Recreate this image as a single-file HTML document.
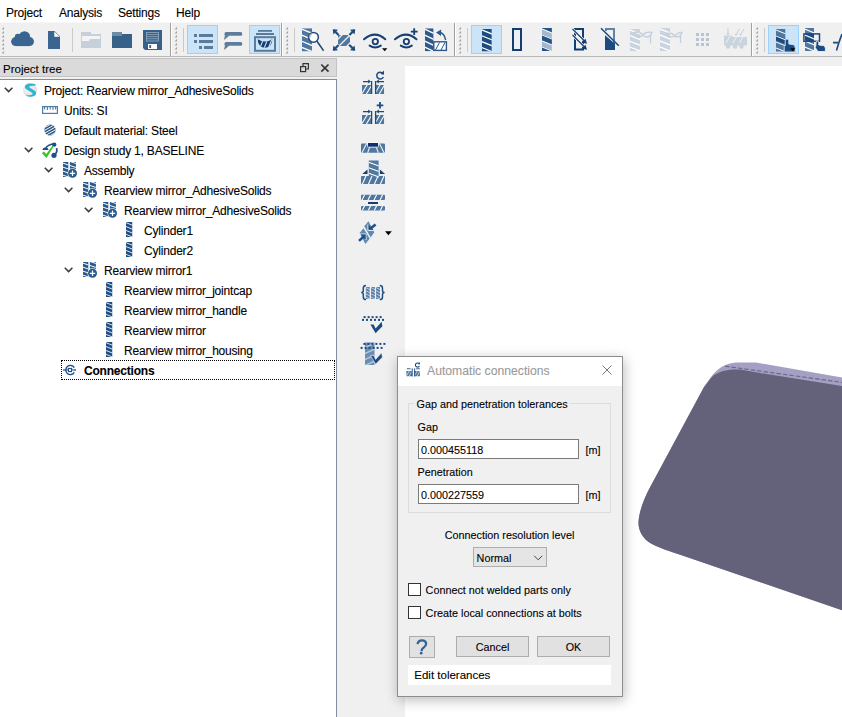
<!DOCTYPE html>
<html><head><meta charset="utf-8">
<style>
*{margin:0;padding:0;box-sizing:border-box}
html,body{width:842px;height:717px;overflow:hidden;background:#f0f0f0;font-family:"Liberation Sans",sans-serif;font-size:11.5px;color:#000;-webkit-text-stroke:0.1px currentColor}
.a{position:absolute}
#menu{left:0;top:0;width:842px;height:23px;background:#fff}
#menu span{position:absolute;top:5.6px;font-size:12px;letter-spacing:-0.2px;line-height:14px}
#tb{left:0;top:23px;width:842px;height:34px;background:#f0f0f0;border-bottom:1px solid #b9b9b9}
#dtitle{left:0;top:58px;width:337px;height:19px;background:#dadada;border:1px solid #c3c3c3;border-left:none}
#tree{left:0;top:79px;width:337px;height:638px;background:#fff;border-top:1px solid #828c9c;border-right:1px solid #828c9c}
#view{left:405px;top:66px;width:437px;height:651px;background:#fff}
.row{position:absolute;height:20px;line-height:20px;font-size:12px;letter-spacing:-0.2px;white-space:nowrap;padding-top:1px}
svg.ov{position:absolute;left:0;top:0}
</style></head><body>
<div id="menu" class="a">
<span style="left:6px">Project</span>
<span style="left:59px">Analysis</span>
<span style="left:118px">Settings</span>
<span style="left:176px">Help</span>
</div>
<div id="tb" class="a"></div>
<div id="dtitle" class="a"></div>
<div class="a" style="left:3px;top:62px;font-size:11.5px;line-height:14px">Project tree</div>
<div id="tree" class="a"></div>
<div id="view" class="a"></div>

<div class="row" style="left:44px;top:80px">Project: Rearview mirror_AdhesiveSolids</div>
<div class="row" style="left:64px;top:100px">Units: SI</div>
<div class="row" style="left:64px;top:120px">Default material: Steel</div>
<div class="row" style="left:64px;top:140px">Design study 1, BASELINE</div>
<div class="row" style="left:84px;top:160px">Assembly</div>
<div class="row" style="left:104px;top:180px">Rearview mirror_AdhesiveSolids</div>
<div class="row" style="left:124px;top:200px">Rearview mirror_AdhesiveSolids</div>
<div class="row" style="left:144px;top:220px">Cylinder1</div>
<div class="row" style="left:144px;top:240px">Cylinder2</div>
<div class="row" style="left:104px;top:260px">Rearview mirror1</div>
<div class="row" style="left:124px;top:280px">Rearview mirror_jointcap</div>
<div class="row" style="left:124px;top:300px">Rearview mirror_handle</div>
<div class="row" style="left:124px;top:320px">Rearview mirror</div>
<div class="row" style="left:124px;top:340px">Rearview mirror_housing</div>
<div class="row" style="left:84px;top:360px;font-weight:bold">Connections</div>
<div class="a" style="left:61px;top:360px;width:274px;height:20px;border:1px dotted #000"></div>
<svg class="ov" width="842" height="717" viewBox="0 0 842 717" shape-rendering="geometricPrecision">
<defs>
<symbol id="pt" viewBox="0 0 10 23" preserveAspectRatio="none">
<rect x="0" y="0" width="10" height="23" fill="currentColor"/>
<path d="M-1,0.6 L11,5.4 M-1,6.6 L11,11.4 M-1,12.6 L11,17.4 M-1,18.6 L11,23.4" stroke="#fff" stroke-width="1.3"/>
</symbol>
<symbol id="grip" viewBox="0 0 3 28"><path d="M0.6,2.2 L2.6,0.2 L2.6,2.2 Z M0.6,6.2 L2.6,4.2 L2.6,6.2 Z M0.6,10.2 L2.6,8.2 L2.6,10.2 Z M0.6,14.2 L2.6,12.2 L2.6,14.2 Z M0.6,18.2 L2.6,16.2 L2.6,18.2 Z M0.6,22.2 L2.6,20.2 L2.6,22.2 Z M0.6,26.2 L2.6,24.2 L2.6,26.2 Z " fill="#a2a2a2" stroke="#a2a2a2" stroke-width="0.4" stroke-linejoin="round"/></symbol>
</defs>
<!-- toolbar lines -->
<rect x="0" y="22" width="842" height="1" fill="#f7f7f7"/>
<g fill="#a0a0a0"><rect x="170" y="23" width="1" height="33"/><rect x="281" y="23" width="1" height="33"/><rect x="454" y="23" width="1" height="33"/><rect x="751" y="23" width="1" height="33"/></g>
<g fill="#fff"><rect x="171" y="23" width="1" height="33"/><rect x="282" y="23" width="1" height="33"/><rect x="455" y="23" width="1" height="33"/><rect x="752" y="23" width="1" height="33"/></g>
<use href="#grip" x="1.4" y="27" width="3" height="28"/>
<use href="#grip" x="174.4" y="27" width="3" height="28"/>
<use href="#grip" x="285.4" y="27" width="3" height="28"/>
<use href="#grip" x="458.4" y="27" width="3" height="28"/>
<use href="#grip" x="755.4" y="27" width="3" height="28"/>
<g fill="#cacaca"><rect x="72" y="28" width="1" height="24"/><rect x="183" y="28" width="1" height="24"/><rect x="294" y="28" width="1" height="24"/><rect x="467" y="28" width="1" height="24"/><rect x="764" y="28" width="1" height="24"/></g>
<!-- selected buttons -->
<g fill="#cce4f7" stroke="#99d1ff" stroke-width="1">
<rect x="187.5" y="25.5" width="30" height="28"/>
<rect x="249.5" y="25.5" width="30" height="28"/>
<rect x="471.5" y="25.5" width="30" height="28"/>
<rect x="768.5" y="25.5" width="30" height="28"/>
</g>
<!-- cloud -->
<g fill="#3a6590">
<circle cx="24.5" cy="36.8" r="5.6"/><circle cx="18" cy="37" r="3.2"/><circle cx="15.6" cy="41.6" r="4.5"/><circle cx="29.5" cy="41.6" r="4.5"/><rect x="15.6" y="37" width="14" height="9.1"/>
</g>
<!-- doc -->
<path d="M48,31 L54.5,31 L60,36.5 L60,49 L48,49 Z" fill="#3a6590"/>
<path d="M54.3,31.4 L59.6,36.8 L54.3,36.8 Z" fill="#fff"/>
<!-- light folder -->
<path d="M81,32 L91,32 L91,34 L101,34 L101,48 L81,48 Z" fill="#c6d0da"/>
<path d="M82,36 L100,36 L100,39 L90,39 L89,41 L82,41 Z" fill="#f4f4f4"/>
<!-- dark folder -->
<path d="M112,36 L122,36 L122,34 L132,34 L132,48 L112,48 Z" fill="#376189"/>
<rect x="112" y="32" width="10" height="4" fill="#6f8ca7"/>
<!-- floppy -->
<path d="M143,30 L162,30 L162,50 L145,50 L143,48 Z" fill="#376189"/>
<g stroke="#8aa3bb" stroke-width="0.9" fill="none"><rect x="146.5" y="32.5" width="12" height="8.5"/><path d="M146.5,34.6 H158.5 M146.5,36.7 H158.5 M146.5,38.8 H158.5"/></g>
<rect x="148" y="44" width="9" height="5" fill="#fff"/>
<rect x="149.3" y="45" width="1.8" height="3" fill="#376189"/>
<!-- list icon -->
<g fill="#5b7b9b">
<rect x="194" y="34" width="3" height="3"/><rect x="199" y="34" width="14" height="3"/>
<rect x="194" y="40" width="3" height="3"/><rect x="199" y="40" width="14" height="3"/>
<rect x="199" y="46" width="3" height="3"/><rect x="204" y="46" width="9" height="3"/>
</g>
<!-- comments -->
<g fill="#5d7d9d">
<rect x="224.5" y="32" width="17.7" height="3.8" rx="1.5"/><path d="M225,35 L224,40 L229.5,35.5 Z"/>
<rect x="224.5" y="42" width="17.7" height="3.8" rx="1.5"/><path d="M225,45 L224,50 L229.5,45.5 Z"/>
</g>
<!-- view stack icon -->
<g fill="#5b7b9b">
<rect x="258" y="30" width="14" height="1.8"/>
<rect x="256" y="33" width="18" height="2"/>
</g>
<rect x="255" y="37.2" width="20" height="13.6" fill="none" stroke="#5b7b9b" stroke-width="2"/>
<clipPath id="moon"><path d="M257.8,39.2 Q265,43.8 272.2,39.2 C272.4,44.5 268.8,47.7 265,47.7 C261.2,47.7 257.6,44.5 257.8,39.2 Z"/></clipPath>
<g clip-path="url(#moon)"><rect x="257" y="39" width="16" height="10" fill="#173d72"/><path d="M259.5,49 L263.5,39 M263.8,49 L267.8,39 M268,49 L272,39" stroke="#cce4f7" stroke-width="1.1"/></g>
<!-- search -->
<use href="#pt" x="302" y="28.2" width="10" height="23.3" style="color:#4f77a0"/>
<circle cx="313.5" cy="37.3" r="4.9" fill="#fff" stroke="#1f4a7a" stroke-width="1.5"/>
<path d="M309.5,37.5 A4,4 0 0 1 312,33.6" stroke="#9aa9b8" stroke-width="1.5" fill="none"/>
<path d="M317,41.3 L323.6,50.8" stroke="#1f4a7a" stroke-width="1.5"/>
<!-- cross arrows -->
<clipPath id="ova"><path d="M338,35 L347.5,35 L350,37.5 L350,46 L340.5,46 L338,43.5 Z"/></clipPath>
<g clip-path="url(#ova)"><rect x="337" y="34" width="14" height="13" fill="#4f77a0"/>
<path d="M334,43 L344,33 M338,47 L352,33 M342,51 L352,41" stroke="#f0f0f0" stroke-width="1.3"/></g>
<path d="M333.5,30 L338.6,35.1 M354.5,30 L349.4,35.1 M333.5,50 L338.6,44.9 M354.5,50 L349.4,44.9" stroke="#1c4b80" stroke-width="2.1"/>
<g fill="#1c4b80">
<path d="M332.8,29.2 L338,29.8 L333.4,34.4 Z"/><path d="M355.2,29.2 L350,29.8 L354.6,34.4 Z"/>
<path d="M332.8,50.8 L338,50.2 L333.4,45.6 Z"/><path d="M355.2,50.8 L350,50.2 L354.6,45.6 Z"/>
</g>
<!-- eye 1 -->
<g stroke="#173f73" stroke-width="2" fill="none" stroke-linecap="round">
<path d="M364,39.3 Q375,30 385.3,39.3"/>
<circle cx="375.3" cy="41.6" r="2.7" stroke-width="1.8"/>
<path d="M369.6,45.6 Q375.2,49.2 380.8,45.6"/>
</g>
<path d="M382,48.2 L387.4,48.2 L384.7,51.2 Z" fill="#000"/>
<!-- eye 2 -->
<g stroke="#173f73" stroke-width="2" fill="none" stroke-linecap="round">
<path d="M395,39.3 Q406,30 416.5,39.3"/>
<circle cx="406.4" cy="41.6" r="2.7" stroke-width="1.8"/>
<path d="M400.8,45.6 Q406.3,49.2 411.8,45.6"/>
<path d="M414.2,28.2 V35 M410.8,31.6 H417.6" stroke-width="1.8" stroke-linecap="butt"/>
</g>
<!-- rotate part -->
<use href="#pt" x="425" y="28.3" width="8.6" height="23" style="color:#2d5a8a"/>
<rect x="433.8" y="41.8" width="12.6" height="8.6" fill="#fff" stroke="#2d5a8a" stroke-width="1.4"/>
<path d="M435.5,50 L439.5,42.5 M441,50 L445,42.5" stroke="#2d5a8a" stroke-width="1"/>
<path d="M439,32.3 Q444.5,33 445.6,40" stroke="#2d5a8a" stroke-width="1.5" fill="none"/>
<path d="M436,32.4 L441.2,29.6 L441,36 Z" fill="#2d5a8a"/>
<!-- group 4 -->
<use href="#pt" x="482" y="29" width="9.8" height="22.5" style="color:#1c4b80"/>
<rect x="513" y="29" width="8" height="21" fill="none" stroke="#123f73" stroke-width="2"/>
<!-- alternating part -->
<clipPath id="alt"><rect x="542" y="28" width="9.8" height="23"/></clipPath>
<g clip-path="url(#alt)">
<rect x="542" y="28" width="10" height="23" fill="#a3b8cd"/>
<path d="M541,28 L553,28 L553,33 L541,28 Z M541,34 L553,39 L553,45 L541,40 Z M541,46 L553,51 L541,51 Z" fill="#24538a"/>
<path d="M541,28.6 L553,33.4 M541,34.6 L553,39.4 M541,40.6 L553,45.4 M541,46.6 L553,51.4" stroke="#fff" stroke-width="1.1"/>
</g>
<!-- rect with arrows -->
<rect x="575" y="29" width="8" height="20.5" fill="none" stroke="#123f73" stroke-width="2"/>
<path d="M572.5,29 L585,41.5 M572.5,35 L585,47.5" stroke="#f0f0f0" stroke-width="2.5"/>
<path d="M572.5,29 L585,41.5 M572.5,35 L585,47.5" stroke="#123f73" stroke-width="1.1"/>
<path d="M587,43.8 L581.5,42.5 L585.5,38.8 Z M587,49.8 L581.5,48.5 L585.5,44.8 Z" fill="#123f73"/>
<!-- half filled rect -->
<path d="M606,31 V29 H614 V44" fill="none" stroke="#5f82a8" stroke-width="2"/>
<path d="M605,35.3 L615,43.8 L615,50 L605,50 Z" fill="#1c4b80"/>
<path d="M601,28.2 L618.8,45.8" stroke="#1c4b80" stroke-width="1.5"/>
<!-- disabled mask 1 -->
<use href="#pt" x="630" y="29" width="10" height="22" style="color:#c9d4df"/>
<g stroke="#c3cfdb" stroke-width="1.3" fill="none">
<path d="M634,32.5 Q640,31 643,35 Q646,31 652,32.5 Q650,37 647,37 Q644,37 643,35 Q641,37 638,37 Q635,37 634,32.5 Z"/>
<path d="M650.5,35 V43.5"/>
</g>
<!-- disabled mask 2 -->
<use href="#pt" x="660" y="28" width="10" height="23" style="color:#c9d4df"/>
<g stroke="#c3cfdb" stroke-width="1.3" fill="none">
<path d="M666,33.5 Q672,32 675,36 Q678,32 682,32.5 Q680,37 678,37 Q675,37 675,36 Q673,37 670,37 Q667,37 666,33.5 Z"/>
<path d="M680.5,35 V43"/>
</g>
<!-- grid -->
<g fill="#b6c5d4">
<rect x="696" y="33" width="3" height="3"/><rect x="701" y="33" width="3" height="3"/><rect x="706" y="33" width="3" height="3"/>
<rect x="696" y="38" width="3" height="3"/><rect x="701" y="38" width="3" height="3"/><rect x="706" y="38" width="3" height="3"/>
<rect x="696" y="43" width="3" height="3"/><rect x="701" y="43" width="3" height="3"/><rect x="706" y="43" width="3" height="3"/>
</g>
<!-- disabled loads -->
<g fill="#c9d4df">
<path d="M724,35.5 L731,35.5 L733,37 L747,37 L747,45.5 L724,45.5 Z"/>
<circle cx="728" cy="46.5" r="2.2"/><circle cx="735" cy="46.5" r="2.2"/><circle cx="741.5" cy="46.5" r="2.2"/>
</g>
<path d="M726,43 L730,36 M733,43 L737,36 M739.5,43 L743.5,36" stroke="#f0f0f0" stroke-width="1"/>
<g stroke="#c3cfdb" stroke-width="1" fill="none"><path d="M728,28 V34 M739.5,29 L736,35 M744,29 L740.5,35"/></g>
<g fill="#c3cfdb"><path d="M726.5,33 L729.5,33 L728,35.5 Z M735,33.5 L737.5,34.5 L735.5,36 Z M739.5,33.5 L742,34.5 L740,36 Z"/></g>
<!-- group 5 -->
<clipPath id="p5"><rect x="776" y="29" width="9.3" height="22.5"/></clipPath>
<g clip-path="url(#p5)">
<rect x="776" y="29" width="10" height="23" fill="#4f77a0"/>
<path d="M775,34.5 L787,39.5 L787,45 L775,40 Z" fill="#1c4b80"/>
<path d="M775,29.6 L787,34.4 M775,35.6 L787,40.4 M775,41.6 L787,46.4 M775,47.6 L787,52.4" stroke="#fff" stroke-width="1.1"/>
</g>
<path d="M784.2,52 L784.2,46.5 L785.2,45.5 L785.2,40.8 Q785.2,39 787,39 Q788.8,39 788.8,40.8 L788.8,44 L793,44.6 Q795.2,45 795.2,47.5 L795.2,52 Z" fill="#1c4b80" stroke="#cce4f7" stroke-width="0.9"/>
<path d="M790.2,48.2 L795.4,48.2 L792.8,51.2 Z" fill="#000"/>
<!-- part rect hand -->
<clipPath id="p6"><rect x="805" y="28" width="9" height="23"/></clipPath>
<g clip-path="url(#p6)">
<rect x="805" y="28" width="9" height="23" fill="#4f77a0"/>
<rect x="805" y="34" width="9" height="7" fill="#1c4b80"/>
<path d="M804,28.6 L815,33.4 M804,34.6 L815,39.4 M804,40.6 L815,45.4 M804,46.6 L815,51.4" stroke="#fff" stroke-width="1.1"/>
</g>
<rect x="803.9" y="33.9" width="15.6" height="7.4" fill="none" stroke="#1c4b80" stroke-width="1.5"/>
<path d="M818,51.5 L815.2,47.5 L815.8,46 L816,42.8 Q816,41 817.4,41 Q818.8,41 818.8,42.8 L818.8,45 L823.5,45.6 Q825.4,46 825.4,48.5 L825.4,51.5 Z" fill="#1c4b80" stroke="#f0f0f0" stroke-width="0.9"/>
<path d="M833,42.6 H838 M836.5,50.5 Q839.5,40 842,34" stroke="#1c4b80" stroke-width="1.6" fill="none"/>
<!-- dock title icons -->
<g stroke="#333" stroke-width="1.2" fill="none">
<path d="M303,66 V63.6 H308.4 V69 H305.5"/>
<rect x="300.6" y="66.6" width="5" height="5"/>
</g>
<path d="M321.3,64.5 L328.5,71.7 M328.5,64.5 L321.3,71.7" stroke="#333" stroke-width="1.7"/>
<!-- tree chevrons -->
<g stroke="#3a3a3a" stroke-width="1.5" fill="none">
<path d="M4.8,87.8 L8.6,91.6 L12.4,87.8"/>
<path d="M24.8,147.8 L28.6,151.6 L32.4,147.8"/>
<path d="M44.8,167.8 L48.6,171.6 L52.4,167.8"/>
<path d="M64.8,187.8 L68.6,191.6 L72.4,187.8"/>
<path d="M84.8,207.8 L88.6,211.6 L92.4,207.8"/>
<path d="M64.8,267.8 L68.6,271.6 L72.4,267.8"/>
</g>
<!-- S logo -->
<radialGradient id="sg" cx="0.4" cy="0.4" r="0.7"><stop offset="0" stop-color="#fafafa"/><stop offset="1" stop-color="#d8d8d8"/></radialGradient>
<circle cx="30" cy="90" r="7" fill="url(#sg)"/>
<path d="M35.6,84.3 C32,83 27,83.2 25.4,85.2 C24.2,86.8 25,88.6 27,89.8 L32,92.8 C33,93.5 32.8,94.6 31.2,95 L25.3,95.6 C27.5,96.8 31.5,97 34.2,96 C36.5,95 36.8,92.5 35,91 L30,87.8 C29,87.1 29.3,86.2 30.5,86 L35.6,85.6 Z" fill="#30b5d3"/>
<!-- ruler -->
<rect x="42.6" y="106.6" width="14.8" height="6.8" fill="#fff" stroke="#4f7ba6" stroke-width="1.2"/>
<path d="M44.6,107 V109.5 M47.4,107 V110 M50.2,107 V109.5 M53,107 V110 M55.6,107 V109.5" stroke="#4f7ba6" stroke-width="1.1"/>
<!-- material -->
<clipPath id="matc"><circle cx="50" cy="130" r="5.6"/></clipPath>
<g clip-path="url(#matc)"><rect x="43" y="123" width="14" height="14" fill="#2c5886"/>
<path d="M43,128.5 L57,120.5 M43,131.3 L57,123.3 M43,134.1 L57,126.1 M43,136.9 L57,128.9 M43,139.7 L57,131.7" stroke="#fff" stroke-width="1"/></g>
<!-- design study -->
<g fill="none" stroke="#1f4f86" stroke-width="1.6">
<path d="M45.8,148 Q48,144.6 53,144"/>
<path d="M56.6,148 Q57.5,152 55.5,154"/>
</g>
<g fill="#1f4f86">
<circle cx="54.2" cy="144.6" r="2.2"/>
<path d="M42.5,150 A3,2.6 0 0 1 48.5,150 Z"/>
<circle cx="54" cy="155.3" r="2.6"/>
</g>
<path d="M41.9,153.3 L43.9,151.4 L46.3,154 L52.4,145.8 L53.5,146.7 L46.6,157.9 Z" fill="#3cc22c"/>
<!-- assembly symbol -->
<symbol id="asm" viewBox="0 0 15 16">
<clipPath id="asmc"><rect x="0" y="0" width="5.4" height="15"/><rect x="7" y="0" width="6" height="7"/></clipPath>
<g clip-path="url(#asmc)"><rect x="0" y="0" width="14" height="15" fill="#2a5a8c"/>
<path d="M-1,0.8 L14,5.8 M-1,4.8 L14,9.8 M-1,8.8 L14,13.8 M-1,12.8 L14,17.8 M-1,-3.2 L14,1.8" stroke="#fff" stroke-width="1"/></g>
<circle cx="9.6" cy="11.3" r="5" fill="#fff"/>
<circle cx="9.6" cy="11.3" r="4.5" fill="#2a5a8c"/>
<path d="M9.6,8.6 V14 M6.9,11.3 H12.3" stroke="#fff" stroke-width="1.2"/>
</symbol>
<use href="#asm" x="62.9" y="162" width="15" height="16"/>
<use href="#asm" x="82.9" y="182" width="15" height="16"/>
<use href="#asm" x="102.9" y="202" width="15" height="16"/>
<use href="#asm" x="82.9" y="262" width="15" height="16"/>
<!-- parts in tree -->
<g style="color:#1f4e85">
<use href="#pt" x="126" y="222" width="6.5" height="15"/>
<use href="#pt" x="126" y="242" width="6.5" height="15"/>
<use href="#pt" x="106" y="282" width="6.5" height="15"/>
<use href="#pt" x="106" y="302" width="6.5" height="15"/>
<use href="#pt" x="106" y="322" width="6.5" height="15"/>
<use href="#pt" x="106" y="342" width="6.5" height="15"/>
</g>
<!-- connections icon -->
<path d="M63,370 H76" stroke="#5a80aa" stroke-width="1.8"/>
<path d="M74.3,367.6 A4.6,4.6 0 1 0 74.3,372.4" fill="none" stroke="#1f4f8c" stroke-width="1.4"/>
<circle cx="70" cy="370" r="2.9" fill="none" stroke="#b4c4d6" stroke-width="0.9" stroke-dasharray="1 1"/>
<rect x="68.5" y="368.5" width="3" height="3" fill="#fff" stroke="#1f4f8c" stroke-width="1"/>
<!-- vertical toolbar icons -->
<symbol id="blk" viewBox="0 0 10 9" preserveAspectRatio="none">
<rect x="0" y="0" width="10" height="9" fill="#4f77a0"/>
<path d="M-1,10 L6,-1 M4,10 L11,-1" stroke="#fff" stroke-width="1.1"/>
</symbol>
<g id="vi1">
<use href="#blk" x="362" y="85" width="9.5" height="9"/>
<use href="#blk" x="375" y="85" width="9.2" height="9"/>
<path d="M371.6,81 V94 M375.6,81 V94" stroke="#1c4b80" stroke-width="1.3"/>
<path d="M363,81.6 H369 M378,81.6 H384" stroke="#1c4b80" stroke-width="1.2"/>
<path d="M371,81.6 L368.2,79.6 V83.6 Z M376,81.6 L378.8,79.6 V83.6 Z" fill="#1c4b80"/>
</g>
<path d="M382.8,73.4 A3.4,3.4 0 1 0 383.3,77" fill="none" stroke="#1c4b80" stroke-width="1.5"/>
<path d="M384,70.5 L384,74.8 L380.3,74 Z" fill="#1c4b80"/>
<use href="#vi1" y="30"/>
<path d="M380,102 V108.6 M376.7,105.3 H383.3" stroke="#1c4b80" stroke-width="1.8"/>
<!-- icon3 bridge -->
<rect x="361" y="143.4" width="24" height="9.4" rx="1.2" fill="#4f77a0"/>
<path d="M366.6,142.5 L379.4,142.5 L377.6,147.6 L368.4,147.6 Z" fill="#f0f0f0"/>
<path d="M362,152.8 L366.6,143.4 M367.6,152.8 L369.6,147.6 M378.4,152.8 L376.4,147.6 M384,152.8 L379.4,143.4" stroke="#f0f0f0" stroke-width="1.1"/>
<rect x="367.5" y="142.6" width="11" height="4.6" fill="#fff"/>
<rect x="368" y="143" width="10" height="3.7" fill="#0f2f6e"/>
<!-- icon4 -->
<clipPath id="i4"><rect x="368.8" y="160.6" width="9.8" height="15.5"/><rect x="361" y="175.9" width="24" height="8.1" rx="0.8"/></clipPath>
<g clip-path="url(#i4)"><rect x="360" y="160" width="26" height="25" fill="#4f77a0"/>
<path d="M368,162 L379,166 M368,167.5 L379,171.5 M368,173 L379,177 M362,185 L366,176 M368,185 L372,176 M374,185 L378,176 M380,185 L384,176" stroke="#fff" stroke-width="1.1"/></g>
<path d="M362.3,174 L367.5,169.5 L367.5,174 Z M379.9,169.5 L385.1,174 L379.9,174 Z" fill="#173f73"/>
<!-- icon5 -->
<clipPath id="i5"><rect x="361" y="194.8" width="24" height="5.1" rx="1"/><rect x="361" y="205.9" width="24" height="4.7" rx="1"/></clipPath>
<g clip-path="url(#i5)"><rect x="360" y="194" width="26" height="18" fill="#4f77a0"/>
<path d="M362,200 L365,194 M368,200 L371,194 M374,200 L377,194 M380,200 L383,194 M362,211 L365,205 M368,211 L371,205 M374,211 L377,205 M380,211 L383,205" stroke="#fff" stroke-width="1.1"/></g>
<rect x="368" y="202" width="10" height="2" fill="#173f73"/>
<!-- icon6 connect -->
<path d="M368.5,221.3 L374.3,232.3 L370.4,237.8 L364,226.6 Z M363.5,228.3 L369.8,238.6 L365.4,244 L359.6,233 Z" fill="#618ab2"/>
<path d="M364,226.8 L370.2,238" stroke="#f0f0f0" stroke-width="1.2"/>
<path d="M367.9,224.5 V230.5 H374" fill="none" stroke="#dde5ee" stroke-width="1"/>
<path d="M360,234 H366 V240" fill="none" stroke="#dde5ee" stroke-width="1"/>
<path d="M375.6,224.4 L370.5,228.6" stroke="#1f5088" stroke-width="2.6"/>
<path d="M368.6,224.8 L368.6,229.8 L373.6,229.8 Z" fill="#1f5088"/>
<path d="M359,240.9 L363.6,236.6" stroke="#1f5088" stroke-width="2.6"/>
<path d="M360.6,234.6 L365.6,234.6 L365.6,239.6 Z" fill="#1f5088"/>
<path d="M385,231.2 L391.8,231.2 L388.4,235.2 Z" fill="#000"/>
<!-- icon7 braces -->
<g fill="none" stroke="#1f4f86" stroke-width="1.5">
<path d="M366,285.6 Q363.3,285.6 363.3,288.2 V290.6 Q363.3,292.6 361.2,292.6 Q363.3,292.6 363.3,294.6 V297 Q363.3,299.6 366,299.6"/>
<path d="M379.8,285.6 Q382.5,285.6 382.5,288.2 V290.6 Q382.5,292.6 384.6,292.6 Q382.5,292.6 382.5,294.6 V297 Q382.5,299.6 379.8,299.6"/>
</g>
<g style="color:#5a80a8">
<use href="#pt" x="365.6" y="287" width="4.2" height="12"/>
<use href="#pt" x="371" y="287" width="3.9" height="12"/>
<use href="#pt" x="376" y="287" width="4.1" height="12"/>
</g>
<!-- icon8 -->
<g fill="#1c4b80"><rect x="363.6" y="316.1" width="2" height="2"/><rect x="367.6" y="316.1" width="2" height="2"/><rect x="371.6" y="316.1" width="2" height="2"/><rect x="375.6" y="316.1" width="2" height="2"/><rect x="379.6" y="316.1" width="2" height="2"/><rect x="362" y="318.9" width="2" height="2"/><rect x="366" y="318.9" width="2" height="2"/><rect x="370" y="318.9" width="2" height="2"/><rect x="374" y="318.9" width="2" height="2"/><rect x="378" y="318.9" width="2" height="2"/><rect x="382" y="318.9" width="2" height="2"/></g>
<path d="M370.4,324.4 L373.6,324.4 L375.6,328.4 L381.6,321.8 L382.4,326.2 L375.6,333.2 Z" fill="#1c4b80"/>
<!-- icon9 -->
<clipPath id="i9"><rect x="365" y="342.5" width="9.5" height="22.5"/></clipPath>
<g clip-path="url(#i9)"><rect x="364" y="342" width="11" height="23" fill="#6a8db3"/>
<path d="M364,348 L375,343 M364,354 L375,349 M364,360 L375,355 M364,366 L375,361" stroke="#b9c9da" stroke-width="1.4"/></g>
<g fill="#1c4b80"><rect x="363.4" y="342.9" width="2" height="2"/><rect x="367.4" y="342.9" width="2" height="2"/><rect x="371.4" y="342.9" width="2" height="2"/><rect x="375.4" y="342.9" width="2" height="2"/><rect x="379.4" y="342.9" width="2" height="2"/><rect x="383.4" y="342.9" width="2" height="2"/><rect x="360.6" y="346.9" width="2" height="2"/><rect x="364.6" y="346.9" width="2" height="2"/><rect x="368.6" y="346.9" width="2" height="2"/><rect x="372.6" y="346.9" width="2" height="2"/><rect x="376.6" y="346.9" width="2" height="2"/><rect x="380.6" y="346.9" width="2" height="2"/></g>
<path d="M370.4,355.4 L373.6,355.4 L375.6,359.4 L381.6,352.8 L382.4,357.2 L375.6,364.2 Z" fill="#1c4b80" stroke="#f0f0f0" stroke-width="0.6"/>
<!-- 3D shape -->
<path d="M842,377.6 L756,362.5 L736,362.6 C726,363.2 718,368 711,377 L704,387 L649.5,488.3 C644,499 639.5,510 638.5,521.5 C638,531 643,539 651,543.5 C658,547.5 670,551.5 686,556.7 L842,610.3 Z" fill="#a4a0c4"/>
<path d="M842,386 L760,373 L740,369.5 C730,369 722,370 714,375 L711,378 L704,387 L649.5,488.3 C644,499 639.5,510 638.5,521.5 C638,531 643,539 651,543.5 C658,547.5 670,551.5 686,556.7 L842,610.3 Z" fill="#64627a"/>
<path d="M725,366.2 L842,382.4" stroke="#6d6989" stroke-width="1.2" stroke-dasharray="4.5 2"/>
</svg>
<div id="dlg" class="a" style="left:397px;top:356px;width:226px;height:341px;background:#f0f0f0;border:1px solid #8d8d8d;box-shadow:1px 3px 12px rgba(0,0,0,0.28)">
<div class="a" style="left:0;top:0;width:224px;height:29px;background:#fff"></div>
<div class="a" style="left:29px;top:7px;font-size:12.2px;line-height:14px;color:#9a9a9a;white-space:nowrap">Automatic connections</div>
<svg class="a" style="left:0;top:0" width="224" height="339" viewBox="398 357 224 339">
<path d="M602.5,365.5 L611.5,374.5 M611.5,365.5 L602.5,374.5" stroke="#777" stroke-width="1"/>
<g transform="translate(405.6 362.2) scale(0.62) translate(-361 -71)">
<use href="#blk" x="362" y="85" width="9.5" height="9"/>
<use href="#blk" x="375" y="85" width="9.2" height="9"/>
<path d="M371.6,81 V94 M375.6,81 V94" stroke="#1c4b80" stroke-width="1.6"/>
<path d="M363,81.6 H369 M378,81.6 H384" stroke="#1c4b80" stroke-width="1.4"/>
<path d="M382.8,73.4 A3.4,3.4 0 1 0 383.3,77" fill="none" stroke="#1c4b80" stroke-width="1.8"/>
<path d="M384,70.5 L384,74.8 L380.3,74 Z" fill="#1c4b80"/>
</g>
<rect x="408.5" y="403.5" width="202" height="109" fill="none" stroke="#dcdcdc" stroke-width="1"/>
<rect x="414" y="398" width="156" height="10" fill="#f0f0f0"/>
<rect x="418.5" y="439.5" width="160" height="19" fill="#fff" stroke="#7a7a7a" stroke-width="1"/>
<rect x="418.5" y="484.5" width="160" height="19" fill="#fff" stroke="#7a7a7a" stroke-width="1"/>
<rect x="473.5" y="547.5" width="73" height="19" fill="#e5e5e5" stroke="#adadad" stroke-width="1"/>
<path d="M534.2,555.8 L538.2,559.8 L542.2,555.8" fill="none" stroke="#444" stroke-width="1"/>
<rect x="408.5" y="583.5" width="12" height="12" fill="#fff" stroke="#333" stroke-width="1"/>
<rect x="408.5" y="606.5" width="12" height="12" fill="#fff" stroke="#333" stroke-width="1"/>
<rect x="409.5" y="636.5" width="25" height="21" fill="#e1e1e1" stroke="#adadad" stroke-width="1"/>
<path d="M417.6,644.2 C417.9,641.4 420,640.4 422,640.4 C424.6,640.4 426.2,642 426.1,644 C426,646.2 424.4,647.1 423,648.1 C422,648.8 421.7,649.6 421.5,651.2" fill="none" stroke="#2f6394" stroke-width="2.3"/>
<circle cx="421.2" cy="653.2" r="1.35" fill="#2f6394"/>
<rect x="456.5" y="636.5" width="72" height="20" fill="#e1e1e1" stroke="#adadad" stroke-width="1"/>
<rect x="537.5" y="636.5" width="72" height="20" fill="#e1e1e1" stroke="#adadad" stroke-width="1"/>
<rect x="408" y="665" width="203" height="20" fill="#fff"/>
</svg>
</div>
<div class="a" style="left:0;top:0;font-size:10.8px;line-height:13px;white-space:nowrap">
<div class="a" style="left:416.5px;top:398.1px">Gap and penetration tolerances</div>
<div class="a" style="left:417.5px;top:421px">Gap</div>
<div class="a" style="left:421px;top:444.1px">0.000455118</div>
<div class="a" style="left:585.5px;top:444.1px">[m]</div>
<div class="a" style="left:417.5px;top:466.4px">Penetration</div>
<div class="a" style="left:421px;top:489px">0.000227559</div>
<div class="a" style="left:585.5px;top:489px">[m]</div>
<div class="a" style="left:444.7px;top:529.2px">Connection resolution level</div>
<div class="a" style="left:476.6px;top:551.5px">Normal</div>
<div class="a" style="left:425.6px;top:583.8px">Connect not welded parts only</div>
<div class="a" style="left:425.6px;top:606.8px">Create local connections at bolts</div>
<div class="a" style="left:456px;top:640.8px;width:73px;text-align:center">Cancel</div>
<div class="a" style="left:537px;top:640.8px;width:73px;text-align:center">OK</div>
<div class="a" style="left:414.3px;top:669.4px;font-size:11.5px;line-height:13px">Edit tolerances</div>
</div>
</body></html>
